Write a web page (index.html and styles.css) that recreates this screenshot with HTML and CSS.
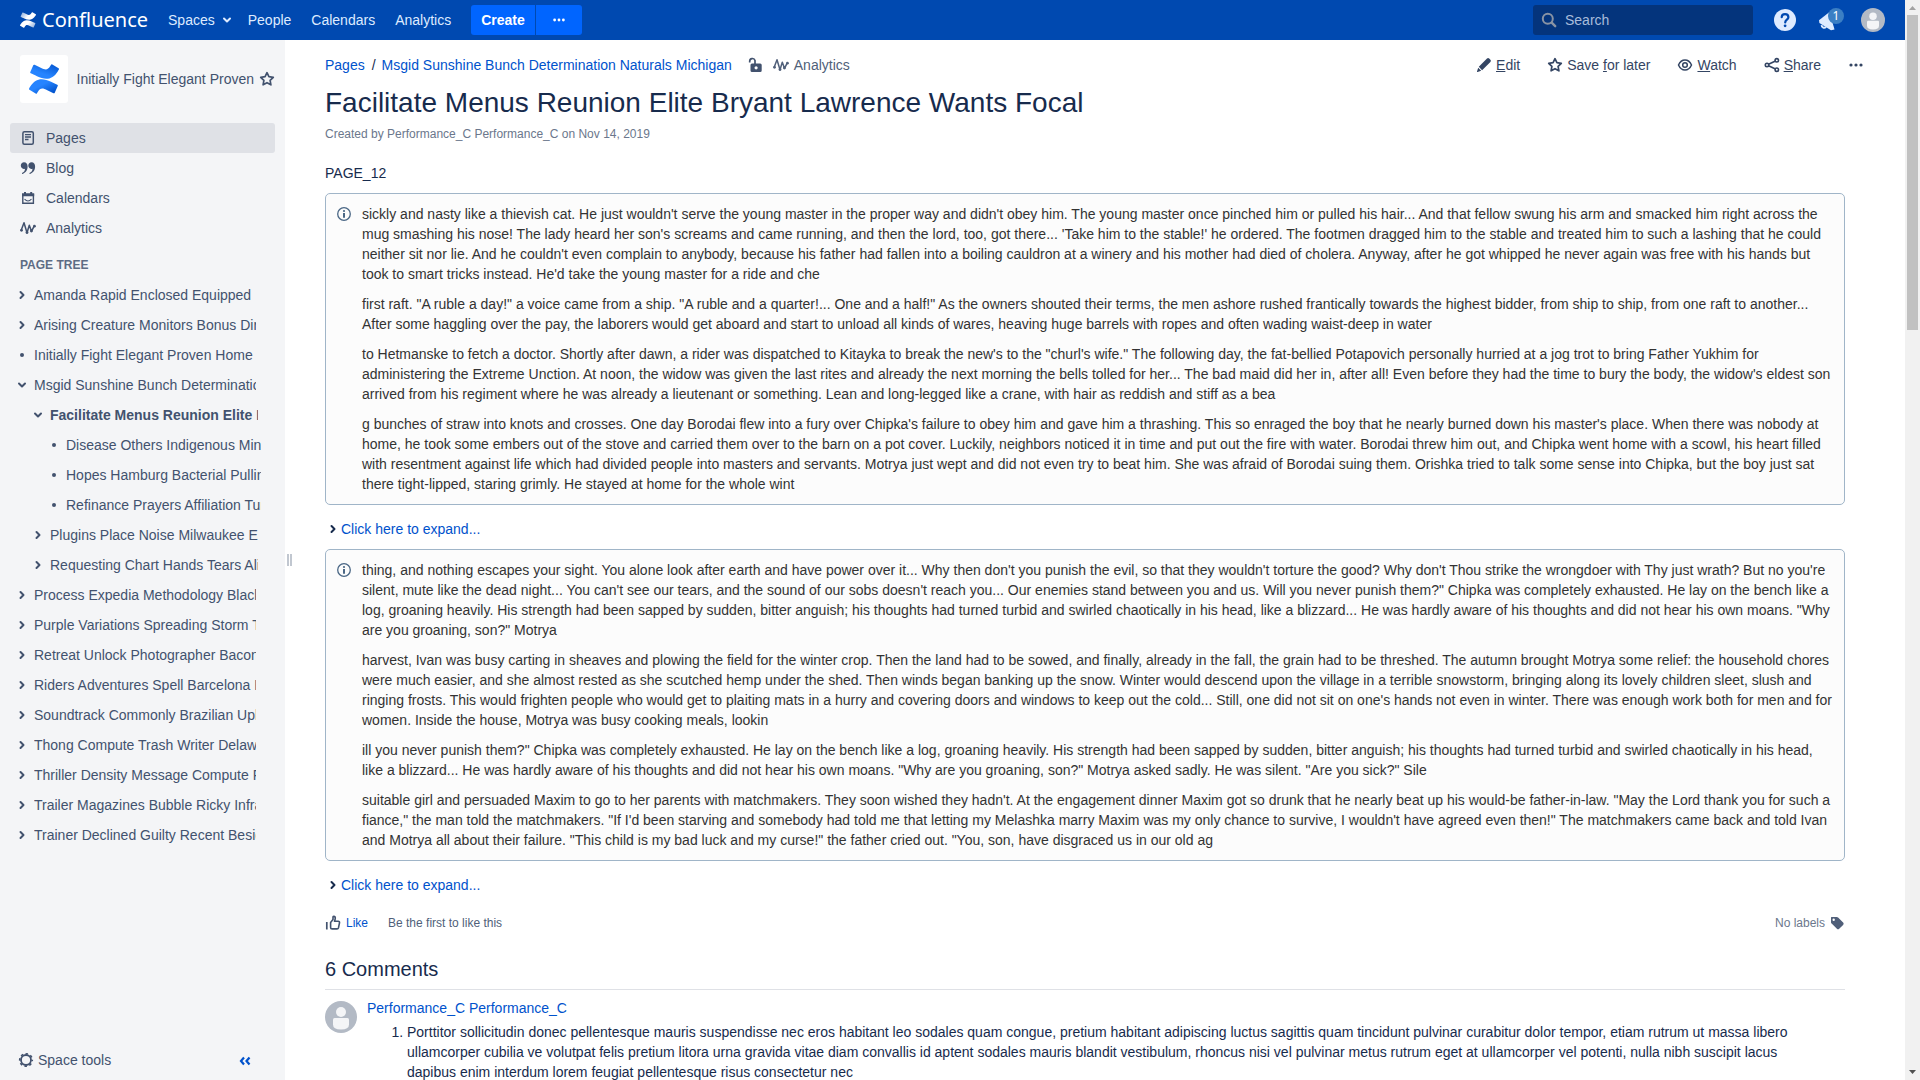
FILE: index.html
```html
<!DOCTYPE html>
<html lang="en">
<head>
<meta charset="utf-8">
<title>Facilitate Menus Reunion Elite Bryant Lawrence Wants Focal - Confluence</title>
<link rel="stylesheet" href="styles.css">
</head>
<body>
<svg class="sprite" aria-hidden="true">
  <defs>
    <linearGradient id="blue-top" x1="1" y1="0" x2="0.3" y2="1"><stop offset="0" stop-color="#0052cc"/><stop offset="0.7" stop-color="#2684ff"/></linearGradient>
    <linearGradient id="blue-low" x1="1" y1="0.8" x2="0.4" y2="0.2"><stop offset="0" stop-color="#0052cc"/><stop offset="0.8" stop-color="#2684ff"/></linearGradient>
    <linearGradient id="white-top" x1="0" y1="0" x2="1" y2="0.4"><stop offset="0" stop-color="#fff" stop-opacity="0.5"/><stop offset="0.6" stop-color="#fff"/></linearGradient>
    <linearGradient id="white-low" x1="1" y1="1" x2="0" y2="0.6"><stop offset="0" stop-color="#fff" stop-opacity="0.5"/><stop offset="0.6" stop-color="#fff"/></linearGradient>
  </defs>
  <symbol id="wave-low" viewBox="0 0 24 24"><path d="M.87 18.257c-.248.382-.53.875-.763 1.245a.764.764 0 0 0 .255 1.04l4.965 3.054a.764.764 0 0 0 1.058-.26c.199-.332.454-.763.733-1.221 1.967-3.247 3.945-2.853 7.508-1.146l4.957 2.337a.764.764 0 0 0 1.028-.382l2.364-5.346a.764.764 0 0 0-.382-1 599.851 599.851 0 0 1-4.965-2.361C10.911 10.97 5.224 11.185.87 18.257z"/></symbol>
  <symbol id="wave-top" viewBox="0 0 24 24"><path d="M23.131 5.743c.249-.405.531-.875.764-1.25a.764.764 0 0 0-.256-1.034L18.675.404a.764.764 0 0 0-1.058.26c-.195.335-.451.763-.734 1.225-1.966 3.246-3.945 2.85-7.508 1.146L4.437.694a.764.764 0 0 0-1.027.382L1.046 6.422a.764.764 0 0 0 .382 1c1.039.49 3.105 1.467 4.965 2.361 6.698 3.246 12.392 3.029 16.738-4.04z"/></symbol>
  <symbol id="right" viewBox="0 0 16 16"><path d="M6.500 5l3 3-3 3" fill="none" stroke="currentColor" stroke-width="2" stroke-linecap="round" stroke-linejoin="round"/></symbol>
  <symbol id="down" viewBox="0 0 16 16"><path d="M5 6.500l3 3 3-3" fill="none" stroke="currentColor" stroke-width="2" stroke-linecap="round" stroke-linejoin="round"/></symbol>
  <symbol id="dot" viewBox="0 0 16 16"><circle cx="8" cy="8" r="2" fill="currentColor"/></symbol>
  <symbol id="more" viewBox="0 0 16 16"><g fill="currentColor"><circle cx="3" cy="8" r="1.600"/><circle cx="8" cy="8" r="1.600"/><circle cx="13" cy="8" r="1.600"/></g></symbol>
  <symbol id="star" viewBox="0 0 16 16"><path d="M8 1.700l1.900 4 4.400.6-3.200 3 .8 4.500L8 11.700l-3.900 2.100.8-4.500-3.200-3 4.400-.6z" fill="none" stroke="currentColor" stroke-width="1.700" stroke-linejoin="round"/></symbol>
  <symbol id="pulse" viewBox="0 0 16 16"><path d="M1.200 10.300L4 2.800l3 10 2.300-7.500 2.200 6 2.500-5" fill="none" stroke="currentColor" stroke-width="1.500" stroke-linejoin="round"/><g fill="currentColor"><circle cx="1.500" cy="10.300" r="1.400"/><circle cx="7" cy="12.600" r="1.400"/><circle cx="11.400" cy="11" r="1.400"/><circle cx="14.400" cy="6.200" r="1.400"/></g></symbol>
  <symbol id="person" viewBox="0 0 32 32"><circle cx="16" cy="16" r="16" fill="#b3bac5"/><circle cx="16" cy="11" r="5" fill="#f4f5f7"/><path d="M8 18.500a1.500 1.500 0 0 1 1.500-1.500h13a1.500 1.500 0 0 1 1.500 1.500v5q0 5-8 5t-8-5z" fill="#f4f5f7"/></symbol>
  <symbol id="info" viewBox="0 0 16 16"><circle cx="8" cy="8" r="6.300" fill="none" stroke="currentColor" stroke-width="1.300"/><circle cx="8" cy="5" r="1.100" fill="currentColor"/><path d="M7 7h2v4.800H7z" fill="currentColor"/></symbol>
</svg>

<div class="screen">
  <div class="app">
    <header class="topbar">
      <a class="brand" href="#">
        <svg class="i16" viewBox="0 0 24 24"><use href="#wave-top" fill="url(#white-top)"/><use href="#wave-low" fill="url(#white-low)"/></svg>
        <span>Confluence</span>
      </a>
      <nav class="menu">
        <a href="#">Spaces <svg class="i16"><use href="#down"/></svg></a>
        <a href="#">People</a>
        <a href="#">Calendars</a>
        <a href="#">Analytics</a>
      </nav>
      <div class="create">
        <button type="button">Create</button>
        <button type="button" aria-label="Create from template"><svg class="i14"><use href="#more"/></svg></button>
      </div>
      <label class="search">
        <svg class="i16" viewBox="0 0 16 16"><circle cx="6.800" cy="6.800" r="5" fill="none" stroke="currentColor" stroke-width="2"/><path d="M10.700 10.700l3.500 3.500" stroke="currentColor" stroke-width="2.400" stroke-linecap="round"/></svg>
        <input type="search" placeholder="Search" aria-label="Search">
      </label>
      <div class="tools">
        <button type="button" aria-label="Help"><svg class="i24" viewBox="0 0 24 24"><circle cx="12" cy="12" r="11" fill="#deebff"/><path d="M8.700 9.200C8.700 5 15.400 5 15.400 9.200c0 2.400-3.200 2.600-3.200 5.300" fill="none" stroke="#0049b0" stroke-width="2.200" stroke-linecap="round"/><circle cx="12.100" cy="17.800" r="1.400" fill="#0049b0"/></svg></button>
        <button type="button" class="notify" aria-label="Notifications"><svg class="i24" viewBox="0 0 24 24"><path d="M2 12.300L12.500 4l5 17.500-3.500.8L2.400 15z" fill="#deebff"/><path d="M4.700 17.200a2.300 2.300 0 0 0 4.200 1.500" fill="none" stroke="#deebff" stroke-width="2"/></svg><span class="badge">1</span></button>
        <button type="button" aria-label="Profile"><svg class="i24"><use href="#person"/></svg></button>
      </div>
    </header>

    <div class="columns">
      <aside class="sidebar">
        <div class="space">
          <a class="space-logo" href="#" aria-label="Space home"><svg viewBox="0 0 24 24"><use href="#wave-top" fill="url(#blue-top)"/><use href="#wave-low" fill="url(#blue-low)"/></svg></a>
          <a href="#">Initially Fight Elegant Proven</a>
          <svg class="i16"><use href="#star"/></svg>
        </div>
        <nav class="sections">
          <a class="current" href="#"><svg class="i16" viewBox="0 0 16 16"><rect x="2.900" y="1.700" width="10.400" height="12.600" rx="1.500" fill="none" stroke="currentColor" stroke-width="1.500"/><path d="M5 4.700h6M5 7h6M5 9.500h3.500" stroke="currentColor" stroke-width="1.300"/></svg>Pages</a>
          <a href="#"><svg class="i16" viewBox="0 0 16 16"><path id="quote" d="M4 2.200c2.400 0 3.600 1.700 3.600 4.200 0 4-2.300 6.700-5.600 7.600v-1c1.900-.8 2.900-2.200 3-4.300-2.500.8-4.200-.9-4.200-3.100C.8 3.600 2.200 2.200 4 2.200z" fill="currentColor"/><use href="#quote" x="7.500"/></svg>Blog</a>
          <a href="#"><svg class="i16" viewBox="0 0 16 16"><path d="M2.800 4.700v8.600h10.600V4.700z" fill="none" stroke="currentColor" stroke-width="1.400"/><path d="M2 3.200h12.200v3H2zM4 2h2v2H4zM10.200 2h2v2h-2z" fill="currentColor"/><path d="M4.500 9q3.500 4 7 0" fill="none" stroke="currentColor" stroke-width="1.100"/></svg>Calendars</a>
          <a href="#"><svg class="i16"><use href="#pulse"/></svg>Analytics</a>
        </nav>
        <h2>PAGE TREE</h2>
        <ul class="tree">
          <li><svg class="i16"><use href="#right"/></svg><a href="#">Amanda Rapid Enclosed Equipped</a></li>
          <li><svg class="i16"><use href="#right"/></svg><a href="#">Arising Creature Monitors Bonus Directory</a></li>
          <li><svg class="i16"><use href="#dot"/></svg><a href="#">Initially Fight Elegant Proven Home</a></li>
          <li><svg class="i16"><use href="#down"/></svg><a href="#">Msgid Sunshine Bunch Determination Naturals Michigan</a></li>
          <li class="level2"><svg class="i16"><use href="#down"/></svg><a class="here" href="#">Facilitate Menus Reunion Elite Bryant Lawrence Wants Focal</a></li>
          <li class="level3"><svg class="i16"><use href="#dot"/></svg><a href="#">Disease Others Indigenous Mining</a></li>
          <li class="level3"><svg class="i16"><use href="#dot"/></svg><a href="#">Hopes Hamburg Bacterial Pulling</a></li>
          <li class="level3"><svg class="i16"><use href="#dot"/></svg><a href="#">Refinance Prayers Affiliation Tunes</a></li>
          <li class="level2"><svg class="i16"><use href="#right"/></svg><a href="#">Plugins Place Noise Milwaukee Eagle</a></li>
          <li class="level2"><svg class="i16"><use href="#right"/></svg><a href="#">Requesting Chart Hands Tears Alive</a></li>
          <li><svg class="i16"><use href="#right"/></svg><a href="#">Process Expedia Methodology Blackberry</a></li>
          <li><svg class="i16"><use href="#right"/></svg><a href="#">Purple Variations Spreading Storm Tracks</a></li>
          <li><svg class="i16"><use href="#right"/></svg><a href="#">Retreat Unlock Photographer Bacon</a></li>
          <li><svg class="i16"><use href="#right"/></svg><a href="#">Riders Adventures Spell Barcelona Hotel</a></li>
          <li><svg class="i16"><use href="#right"/></svg><a href="#">Soundtrack Commonly Brazilian Uploaded</a></li>
          <li><svg class="i16"><use href="#right"/></svg><a href="#">Thong Compute Trash Writer Delaware</a></li>
          <li><svg class="i16"><use href="#right"/></svg><a href="#">Thriller Density Message Compute Folder</a></li>
          <li><svg class="i16"><use href="#right"/></svg><a href="#">Trailer Magazines Bubble Ricky Infrastructure</a></li>
          <li><svg class="i16"><use href="#right"/></svg><a href="#">Trainer Declined Guilty Recent Besides</a></li>
        </ul>
        <div class="space-tools">
          <button type="button"><svg class="i16" viewBox="0 0 16 16"><circle cx="8" cy="8" r="5" fill="none" stroke="currentColor" stroke-width="1.800"/><circle cx="8" cy="8" r="6.300" fill="none" stroke="currentColor" stroke-width="1.600" stroke-dasharray="2.470 2.478" stroke-dashoffset="1.200"/></svg>Space tools</button>
          <button type="button" class="collapse" aria-label="Collapse sidebar"><svg class="i16" viewBox="0 0 16 16"><path d="M7 5.500L4 9l3 3.500M12.500 5.500L9.500 9l3 3.500" fill="none" stroke="currentColor" stroke-width="2.200"/></svg></button>
        </div>
      </aside>
      <div class="splitter"><span></span><span></span></div>

      <main>
        <div class="page-bar">
          <nav class="crumbs">
            <a href="#">Pages</a><span>/</span><a href="#">Msgid Sunshine Bunch Determination Naturals Michigan</a>
            <svg class="i16 lock" viewBox="0 0 16 16"><path d="M2.700 5.500V4.200a2.700 2.700 0 0 1 5.300-.7V7" fill="none" stroke="currentColor" stroke-width="1.700"/><path fill-rule="evenodd" d="M5 6.500h8.200a1.500 1.500 0 0 1 1.500 1.500v5.500a1.500 1.500 0 0 1-1.500 1.500H5a1.500 1.500 0 0 1-1.500-1.500V8A1.500 1.500 0 0 1 5 6.500zm4.100 2.700a1.600 1.600 0 1 0 0 3.200 1.600 1.600 0 0 0 0-3.200z" fill="currentColor"/></svg>
            <a class="stats" href="#"><svg class="i16"><use href="#pulse"/></svg>Analytics</a>
          </nav>
          <div class="actions">
            <a href="#"><svg class="i16" viewBox="0 0 16 16"><path d="M10 2.600l1-1a1.600 1.600 0 0 1 2.200 0l1.200 1.200a1.600 1.600 0 0 1 0 2.200l-8.300 8.200-3.300-3.400zM2.200 10.700l3 3-3.600 1.300a.5.500 0 0 1-.6-.6z" fill="currentColor"/></svg><span><u>E</u>dit</span></a>
            <a href="#"><svg class="i16"><use href="#star"/></svg><span>Save <u>f</u>or later</span></a>
            <a href="#"><svg class="i16" viewBox="0 0 16 16"><path d="M1.500 8c3-6.700 10-6.700 13 0-3 6.700-10 6.700-13 0z" fill="none" stroke="currentColor" stroke-width="1.500"/><circle cx="8" cy="8" r="2.300" fill="none" stroke="currentColor" stroke-width="1.500"/></svg><span><u>W</u>atch</span></a>
            <a href="#"><svg class="i16" viewBox="0 0 16 16"><g fill="none" stroke="currentColor" stroke-width="1.600"><path d="M4.500 7.200l7-3.200M4.500 8.800l7 3.200"/><circle cx="3" cy="8" r="1.700"/><circle cx="12.800" cy="3.300" r="1.700"/><circle cx="12.800" cy="12.700" r="1.700"/></g></svg><span><u>S</u>hare</span></a>
            <button type="button" aria-label="More actions"><svg class="i16"><use href="#more"/></svg></button>
          </div>
        </div>

        <article>
          <h1>Facilitate Menus Reunion Elite Bryant Lawrence Wants Focal</h1>
          <p class="byline">Created by Performance_C Performance_C on Nov 14, 2019</p>
          <p class="lead">PAGE_12</p>

          <section class="panel">
            <svg class="i16"><use href="#info"/></svg>
            <div>
              <p>sickly and nasty like a thievish cat. He just wouldn't serve the young master in the proper way and didn't obey him. The young master once pinched him or pulled his hair... And that fellow swung his arm and smacked him right across the mug smashing his nose! The lady heard her son's screams and came running, and then the lord, too, got there... 'Take him to the stable!' he ordered. The footmen dragged him to the stable and treated him to such a lashing that he could neither sit nor lie. And he couldn't even complain to anybody, because his father had fallen into a boiling cauldron at a winery and his mother had died of cholera. Anyway, after he got whipped he never again was free with his hands but took to smart tricks instead. He'd take the young master for a ride and che</p>
              <p>first raft. "A ruble a day!" a voice came from a ship. "A ruble and a quarter!... One and a half!" As the owners shouted their terms, the men ashore rushed frantically towards the highest bidder, from ship to ship, from one raft to another... After some haggling over the pay, the laborers would get aboard and start to unload all kinds of wares, heaving huge barrels with ropes and often wading waist-deep in water</p>
              <p>to Hetmanske to fetch a doctor. Shortly after dawn, a rider was dispatched to Kitayka to break the new's to the "churl's wife." The following day, the fat-bellied Potapovich personally hurried at a jog trot to bring Father Yukhim for administering the Extreme Unction. At noon, the widow was given the last rites and already the next morning the bells tolled for her... The bad maid did her in, after all! Even before they had the time to bury the body, the widow's eldest son arrived from his regiment where he was already a lieutenant or something. Lean and long-legged like a crane, with hair as reddish and stiff as a bea</p>
              <p>g bunches of straw into knots and crosses. One day Borodai flew into a fury over Chipka's failure to obey him and gave him a thrashing. This so enraged the boy that he nearly burned down his master's place. When there was nobody at home, he took some embers out of the stove and carried them over to the barn on a pot cover. Luckily, neighbors noticed it in time and put out the fire with water. Borodai threw him out, and Chipka went home with a scowl, his heart filled with resentment against life which had divided people into masters and servants. Motrya just wept and did not even try to beat him. She was afraid of Borodai suing them. Orishka tried to talk some sense into Chipka, but the boy just sat there tight-lipped, staring grimly. He stayed at home for the whole wint</p>
            </div>
          </section>
          <button type="button" class="expand"><svg class="i16"><use href="#right"/></svg>Click here to expand...</button>

          <section class="panel">
            <svg class="i16"><use href="#info"/></svg>
            <div>
              <p>thing, and nothing escapes your sight. You alone look after earth and have power over it... Why then don't you punish the evil, so that they wouldn't torture the good? Why don't Thou strike the wrongdoer with Thy just wrath? But no you're silent, mute like the dead night... You can't see our tears, and the sound of our sobs doesn't reach you... Our enemies stand between you and us. Will you never punish them?" Chipka was completely exhausted. He lay on the bench like a log, groaning heavily. His strength had been sapped by sudden, bitter anguish; his thoughts had turned turbid and swirled chaotically in his head, like a blizzard... He was hardly aware of his thoughts and did not hear his own moans. "Why are you groaning, son?" Motrya</p>
              <p>harvest, Ivan was busy carting in sheaves and plowing the field for the winter crop. Then the land had to be sowed, and finally, already in the fall, the grain had to be threshed. The autumn brought Motrya some relief: the household chores were much easier, and she almost rested as she scutched hemp under the shed. Then winds began banking up the snow. Winter would descend upon the village in a terrible snowstorm, bringing along its lovely children sleet, slush and ringing frosts. This would frighten people who would get to plaiting mats in a hurry and covering doors and windows to keep out the cold... Still, one did not sit on one's hands not even in winter. There was enough work both for men and for women. Inside the house, Motrya was busy cooking meals, lookin</p>
              <p>ill you never punish them?" Chipka was completely exhausted. He lay on the bench like a log, groaning heavily. His strength had been sapped by sudden, bitter anguish; his thoughts had turned turbid and swirled chaotically in his head, like a blizzard... He was hardly aware of his thoughts and did not hear his own moans. "Why are you groaning, son?" Motrya asked sadly. He was silent. "Are you sick?" Sile</p>
              <p>suitable girl and persuaded Maxim to go to her parents with matchmakers. They soon wished they hadn't. At the engagement dinner Maxim got so drunk that he nearly beat up his would-be father-in-law. "May the Lord thank you for such a fiance," the man told the matchmakers. "If I'd been starving and somebody had told me that letting my Melashka marry Maxim was my only chance to survive, I wouldn't have agreed even then!" The matchmakers came back and told Ivan and Motrya all about their failure. "This child is my bad luck and my curse!" the father cried out. "You, son, have disgraced us in our old ag</p>
            </div>
          </section>
          <button type="button" class="expand"><svg class="i16"><use href="#right"/></svg>Click here to expand...</button>

          <div class="likes">
            <button type="button" class="like"><svg class="i16" viewBox="0 0 16 16"><path d="M5.600 7.500L8 4.600V2.200c0-1.300 2.300-1.200 2.300.5 0 1.400-.4 2.300-.8 3.500h3.700c1 0 1.500.8 1.300 1.700l-1 4.800c-.2.800-.7 1.200-1.500 1.200H7.200c-.9 0-1.600-.6-1.600-1.500z" fill="none" stroke="#42526e" stroke-width="1.600" stroke-linejoin="round"/><path d="M1.800 7v7.500" stroke="#42526e" stroke-width="1.700"/></svg>Like</button>
            <span>Be the first to like this</span>
            <span class="labels">No labels <svg class="i16" viewBox="0 0 16 16"><path fill-rule="evenodd" d="M2.500 2h5.200c.6 0 1 .2 1.400.6l5 5c.7.700.7 1.600 0 2.300l-3.900 3.900c-.7.700-1.600.7-2.300 0l-5-5A2 2 0 0 1 2 7.400V2.500a.5.500 0 0 1 .5-.5zm2.200 1.500a1.200 1.200 0 1 0 0 2.400 1.200 1.200 0 0 0 0-2.400z" fill="#505f79"/></svg></span>
          </div>

          <h2 class="comments-title">6 Comments</h2>
          <div class="comment">
            <svg class="i32"><use href="#person"/></svg>
            <div>
              <a href="#">Performance_C Performance_C</a>
              <ol>
                <li>Porttitor sollicitudin donec pellentesque mauris suspendisse nec eros habitant leo sodales quam congue, pretium habitant adipiscing luctus sagittis quam tincidunt pulvinar curabitur dolor tempor, etiam rutrum ut massa libero ullamcorper cubilia ve volutpat felis pretium litora urna gravida vitae diam convallis id aptent sodales mauris blandit vestibulum, rhoncus nisi vel pulvinar metus rutrum eget at ullamcorper vel potenti, nulla nibh suscipit lacus dapibus enim interdum lorem feugiat pellentesque risus consectetur nec</li>
              </ol>
            </div>
          </div>
        </article>
      </main>
    </div>
  </div>
  <div class="scrollbar" aria-hidden="true">
    <svg viewBox="0 0 15 15"><path d="M4 10l3.500-4 3.500 4z" fill="#a3a3a3"/></svg>
    <div class="track"><div class="thumb"></div></div>
    <svg viewBox="0 0 15 15"><path d="M4 5l3.500 4L11 5z" fill="#505050"/></svg>
  </div>
</div>
</body>
</html>
```

FILE: styles.css
```css
* { box-sizing: border-box; }
body {
  margin: 0;
  background: #fff;
  color: #172b4d;
  font: 14px/20px "Liberation Sans", Arial, sans-serif;
}
h1, h2, p, ul, ol { margin: 0; padding: 0; }
a { color: #0052cc; text-decoration: none; }
button {
  display: flex;
  align-items: center;
  border: 0;
  padding: 0;
  background: none;
  color: inherit;
  font: inherit;
}
svg { display: block; flex: none; }
.sprite { position: absolute; width: 0; height: 0; }
.i14 { width: 14px; height: 14px; }
.i16 { width: 16px; height: 16px; }
.i24 { width: 24px; height: 24px; }
.i32 { width: 32px; height: 32px; }

.screen { display: flex; height: 100vh; overflow: hidden; }
.app { flex: 1; min-width: 0; display: flex; flex-direction: column; }

/* Top bar */
.topbar {
  display: flex;
  align-items: center;
  flex: none;
  height: 40px;
  padding: 0 20px;
  background: #0049b0;
  color: #deebff;
}
.brand {
  display: flex;
  align-items: center;
  gap: 6px;
  margin-right: 20px;
  color: #fff;
  font: 20px/40px "Noto Sans", sans-serif;
}
.menu { display: flex; gap: 20px; margin-right: 20px; }
.menu a { display: flex; align-items: center; gap: 4px; color: #deebff; }
.menu svg { margin-right: -7px; }
.create { display: flex; gap: 1px; }
.create button {
  height: 30px;
  padding: 0 10px;
  border-radius: 3px 0 0 3px;
  background: #0065ff;
  color: #fff;
  font-weight: bold;
}
.create button + button { padding: 0 16px; border-radius: 0 3px 3px 0; }
.search {
  display: flex;
  align-items: center;
  gap: 8px;
  width: 220px;
  height: 30px;
  margin-left: auto;
  padding: 0 8px;
  border-radius: 3px;
  background: #04347c;
  color: #8993a4;
}
.search input {
  min-width: 0;
  flex: 1;
  border: 0;
  padding: 0;
  background: none;
  color: #b3c7e6;
  font: inherit;
}
.search input::placeholder { color: #a8bcdb; opacity: 1; }
.tools { display: flex; gap: 20px; margin-left: 20px; }
.notify { position: relative; }
.badge {
  position: absolute;
  top: 0;
  right: -3px;
  width: 16px;
  height: 16px;
  border-radius: 8px;
  background: #3b7fc4;
  color: #fff;
  font: 12px/16px "Noto Sans", sans-serif;
}

/* Sidebar */
.columns { display: flex; flex: 1; min-height: 0; }
.sidebar {
  display: flex;
  flex-direction: column;
  flex: none;
  width: 285px;
  background: #f4f5f7;
  color: #42526e;
}
.sidebar a { color: inherit; }
.space { display: flex; align-items: center; padding: 15px 10px 20px 20px; gap: 5px; white-space: nowrap; }
.space-logo {
  display: grid;
  place-items: center;
  width: 48px;
  height: 48px;
  margin-right: 4px;
  border-radius: 3px;
  background: #fff;
}
.space-logo svg { width: 30px; height: 30px; }
.sections { padding: 0 10px; }
.sections a { display: flex; align-items: center; gap: 10px; height: 30px; padding: 0 10px; border-radius: 3px; }
.sections .current { background: #dfe1e6; }
.sidebar h2 { padding: 12px 20px 5px; color: #5e6c84; font: bold 12px/20px "Liberation Sans", Arial, sans-serif; }
.tree { flex: 1; min-height: 0; overflow: hidden; padding-left: 14px; list-style: none; }
.tree li { display: flex; align-items: center; gap: 4px; height: 30px; margin-right: 29px; }
.tree a { flex: 1; overflow: hidden; white-space: nowrap; }
.tree .level2 { padding-left: 16px; margin-right: 27px; }
.tree .level3 { padding-left: 32px; margin-right: 24px; }
.tree .here { font-weight: bold; }
.space-tools {
  display: flex;
  justify-content: space-between;
  padding: 10px 32px 10px 18px;
}
.space-tools button { gap: 4px; }
.space-tools .collapse { color: #0052cc; }
.splitter { display: flex; align-items: center; gap: 1px; width: 10px; padding-left: 2px; flex: none; }
.splitter span { width: 2px; height: 12px; background: #c1c7d0; }

/* Page */
main { flex: 1; min-width: 0; overflow: hidden; padding: 15px 60px 0 30px; }
.page-bar { display: flex; justify-content: space-between; margin-right: -19px; }
.crumbs { display: flex; align-items: center; }
.crumbs span { margin: 0 6px 0 7px; }
.crumbs .lock { margin: 0 10px 0 15px; color: #42526e; }
.crumbs .stats { display: flex; align-items: center; gap: 5px; color: #505f79; }
.actions { display: flex; align-items: center; gap: 27px; color: #344563; }
.actions a { display: flex; align-items: center; gap: 4px; color: inherit; }
h1 { margin-top: 12px; font-size: 28px; font-weight: normal; line-height: 32px; }
.byline { margin-top: 5px; color: #6b778c; font-size: 12px; }
.lead { margin: 19px 0 10px; }
.panel {
  display: flex;
  gap: 10px;
  padding: 10px;
  border: 1px solid #a0b5c8;
  border-radius: 5px;
  background: #fcfcfc;
  color: #333;
}
.panel .i16 { color: #4a6785; }
.panel p + p { margin-top: 10px; }
.panel > svg { margin-top: 2px; }
.expand { margin: 14px 0 10px; color: #0052cc; }
.expand svg { color: #172b4d; }
.likes { display: flex; align-items: center; margin-top: 18px; color: #505f79; font-size: 12px; }
.like { gap: 5px; margin-right: 20px; color: #0052cc; }
.labels { display: flex; align-items: center; gap: 4px; margin-left: auto; color: #6b778c; }
.comments-title {
  margin: 24px 0 11px;
  padding-bottom: 8px;
  border-bottom: 1px solid #dfe1e6;
  font-size: 20px;
  font-weight: normal;
  line-height: 24px;
}
.comment { display: flex; gap: 10px; }
.comment > div { flex: 1; margin-top: -3px; }
.comment ol { margin-top: 4px; padding: 0 40px; }

/* Window scrollbar */
.scrollbar { display: flex; flex-direction: column; flex: none; width: 15px; background: #f1f1f1; }
.scrollbar svg { width: 15px; height: 15px; }
.track { flex: 1; padding: 0 2px; }
.thumb { height: 30%; background: #c1c1c1; }
```
